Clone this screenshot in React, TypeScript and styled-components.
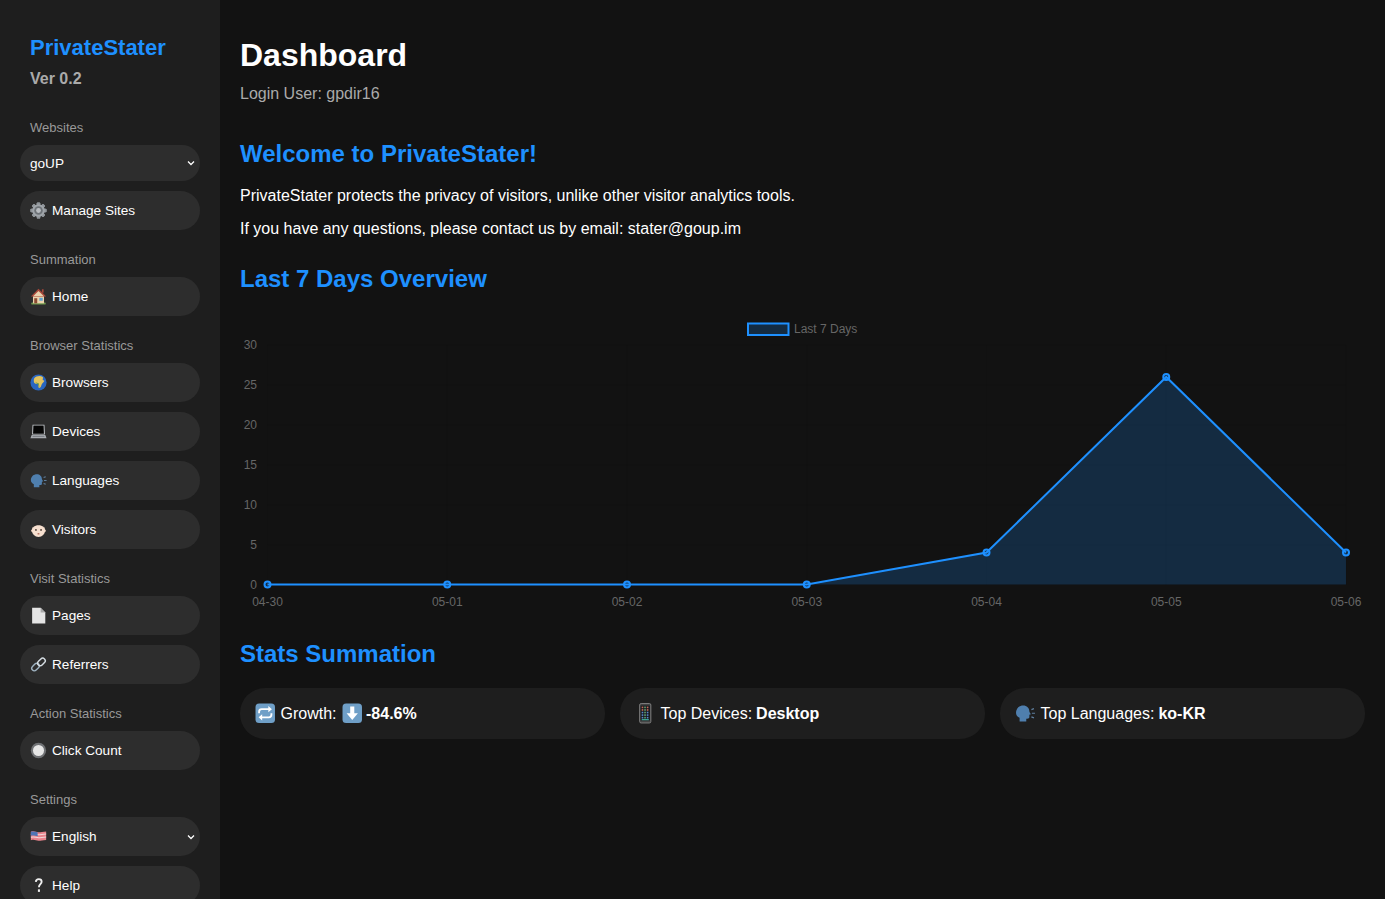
import React from "react";
import styled, { createGlobalStyle } from "styled-components";

const GlobalStyle = createGlobalStyle`
  html, body {
    margin: 0;
    padding: 0;
    height: 100%;
    background: #121212;
    font-family: "Liberation Sans", Arial, sans-serif;
    color: #fff;
    overflow: hidden;
  }
`;

const Layout = styled.div`
  display: flex;
  height: 899px;
  overflow: hidden;
`;

const Sidebar = styled.aside`
  width: 220px;
  flex-shrink: 0;
  box-sizing: border-box;
  padding: 20px;
  background: #1e1e1e;
  overflow: hidden;
`;

const Brand = styled.div`
  padding: 0 10px;
  margin-bottom: 32px;
`;

const BrandName = styled.div`
  margin-top: 15px;
  font-size: 22px;
  line-height: 25px;
  font-weight: 700;
  color: #1e90ff;
`;

const Version = styled.div`
  margin-top: 10px;
  font-size: 16px;
  line-height: 18px;
  font-weight: 700;
  color: #aaa;
`;

const NavGroup = styled.div`
  display: flex;
  flex-direction: column;
  gap: 10px;
  margin-bottom: 22px;
`;

const NavLabel = styled.div`
  padding: 0 10px;
  margin-bottom: 0;
  font-size: 13px;
  line-height: 15px;
  color: #999;
`;

const NavButton = styled.div<{ $short?: boolean }>`
  position: relative;
  display: flex;
  align-items: center;
  gap: 5px;
  flex-shrink: 0;
  box-sizing: border-box;
  height: ${(p) => (p.$short ? 36 : 39)}px;
  padding: 0 10px;
  border-radius: 20px;
  background: #2d2d2d;
  font-size: 13.6px;
  color: #fff;
`;

const Caret = styled.svg`
  position: absolute;
  right: 5px;
  top: 50%;
  width: 8px;
  height: 6px;
  margin-top: -3px;
`;

const Main = styled.main`
  flex: 1;
  min-width: 0;
  box-sizing: border-box;
  padding: 20px;
`;

const PageTitle = styled.h1`
  margin: 17px 0 0;
  font-size: 32px;
  line-height: 37px;
  font-weight: 700;
`;

const LoginUser = styled.div`
  margin-top: 11px;
  font-size: 16px;
  line-height: 18px;
  color: #aaa;
`;

const SectionTitle = styled.h2<{ $top: number }>`
  margin: ${(p) => p.$top}px 0 0;
  font-size: 24px;
  line-height: 28px;
  font-weight: 700;
  color: #1e90ff;
`;

const Paragraph = styled.p<{ $top: number }>`
  margin: ${(p) => p.$top}px 0 0;
  font-size: 16px;
  line-height: 18px;
  color: #fff;
`;

const ChartFrame = styled.svg`
  display: block;
  width: 1125px;
  height: 300px;
  margin-top: 17px;
`;

const StatRow = styled.div`
  display: grid;
  grid-template-columns: repeat(3, 1fr);
  gap: 15px;
  margin-top: 20px;
`;

const StatCard = styled.div`
  display: flex;
  align-items: center;
  gap: 5px;
  height: 51px;
  box-sizing: border-box;
  padding: 0 15px;
  border-radius: 25px;
  background: #1e1e1e;
  font-size: 16px;
  color: #fff;
`;

const StatValue = styled.strong`
  font-weight: 700;
  margin-left: -1px;
`;

const GlyphSvg = styled.svg<{ $size: number }>`
  flex-shrink: 0;
  width: ${(p) => p.$size}px;
  height: ${(p) => p.$size}px;
`;

type GlyphName =
  | "gear" | "house" | "globe" | "laptop" | "head" | "face" | "page"
  | "link" | "radio" | "flag" | "question" | "repeat" | "down" | "phone";

const gearTeeth = [0, 45, 90, 135, 180, 225, 270, 315];

function Glyph({ name, size = 17 }: { name: GlyphName; size?: number }) {
  return (
    <GlyphSvg $size={size} viewBox="0 0 20 20" aria-hidden="true">
      {name === "gear" && (
        <>
          {gearTeeth.map((a) => (
            <rect key={a} x="8" y="0.5" width="4" height="19" rx="1" fill="#8f9499" transform={`rotate(${a} 10 10)`} />
          ))}
          <circle cx="10" cy="10" r="7.4" fill="#9fa4a9" />
          <circle cx="10" cy="10" r="5" fill="#6d7277" />
          <circle cx="10" cy="10" r="2.8" fill="#b9bdc1" />
        </>
      )}
      {name === "house" && (
        <>
          <rect x="1.500" y="17" width="17" height="2.500" rx="1" fill="#6f9a4e" />
          <rect x="3.500" y="9" width="13" height="9" fill="#ecd3ad" />
          <path d="M10 1 19 10H1z" fill="#a9483a" />
          <path d="M10 3.500 16 9.500H4z" fill="#e9d2ae" />
          <rect x="14" y="1.500" width="2" height="4" fill="#a8473a" />
          <rect x="5" y="12" width="3.500" height="6" fill="#8a4a32" />
          <rect x="11" y="11.500" width="4" height="3.500" fill="#5ea2cf" />
        </>
      )}
      {name === "globe" && (
        <>
          <circle cx="10" cy="10" r="9.500" fill="#2a66c0" />
          <path d="M5 5c2-2.500 7-3.500 10-1.500 1 1.500-.5 2 0 3.500l2 1c-.5 2-3 2.500-3.500 5-.5 2-1.500 3.500-3 3.500-1-1.500-.5-3.500-1.500-5-2 .5-4.500-.5-4.500-3C4.500 7 4.500 6 5 5z" fill="#e3c35f" />
          <path d="M6.500 9c1 1.500 2.500 1.500 3.500 1.500.5 2 1 3.500 1 5.500-1-1-1-3-2-4.500-1 0-2-.5-2.500-2.500z" fill="#5b9a4c" />
        </>
      )}
      {name === "laptop" && (
        <>
          <path d="M3 2h14l.5 11.500h-15z" fill="#c8ccd0" />
          <path d="M4 3h12l.4 9.500H3.600z" fill="#050505" />
          <path d="M2 14h16l1.500 4H.5z" fill="#a9adb2" />
          <rect x="3" y="15" width="14" height="1.500" fill="#7d8186" />
        </>
      )}
      {name === "head" && (
        <>
          <path d="M1 9.500C1 5 4.500 2.500 8 2.500s6 2.500 6 5.500c0 1 1 2 1.500 3l-1.500.5v2.500c0 1-1 1.500-3 1.300v2.700H4.500v-3.500C2.500 13.500 1 12 1 9.500z" fill="#4f7fae" />
          <path d="M16 6.500l2.500-1M16.500 10h3M16 13.500l2.500 1" stroke="#5f7f9e" strokeWidth="1.200" fill="none" />
        </>
      )}
      {name === "face" && (
        <>
          <circle cx="2.800" cy="11.500" r="1.500" fill="#eccdb8" />
          <circle cx="17.200" cy="11.500" r="1.500" fill="#eccdb8" />
          <circle cx="10" cy="11" r="7.800" fill="#f6dfcf" />
          <path d="M3.500 7.500C4 3 7 .8 10 .8s6 2.200 6.500 6.700C14 5.500 12.500 5 10 5s-4 .5-6.500 2.500z" fill="#2b2a2a" />
          <circle cx="7" cy="10.500" r="1" fill="#3a2a22" />
          <circle cx="13" cy="10.500" r="1" fill="#3a2a22" />
          <ellipse cx="10" cy="15" rx="1.300" ry="1" fill="#b5705f" />
        </>
      )}
      {name === "page" && (
        <>
          <path d="M2.500 1h10L18 6.500v13H2.500z" fill="#e4e4e4" />
          <path d="M12.500 1v5.500H18z" fill="#a9a9a9" />
        </>
      )}
      {name === "link" && (
        <g fill="none" strokeWidth="1.700" strokeLinecap="round">
          <rect x="1.500" y="10" width="10" height="6" rx="3" transform="rotate(-45 6.500 13)" stroke="#9fb3c2" />
          <rect x="8.500" y="4" width="10" height="6" rx="3" transform="rotate(-45 13.500 7)" stroke="#d5dde3" />
        </g>
      )}
      {name === "radio" && (
        <>
          <circle cx="10" cy="10" r="9" fill="#6f7174" />
          <circle cx="10" cy="10" r="6.500" fill="#e6e6e6" />
        </>
      )}
      {name === "flag" && (
        <>
          <path d="M1 4.500c4-1.500 6 .5 9 .5s5-1 9-1v10c-4 0-6 1-9 1s-5-2-9-.5z" fill="#e8848c" />
          <path d="M1 7.500c4-1.500 6 .5 9 .5s5-1 9-1M1 11c4-1.500 6 .5 9 .5s5-1 9-1" stroke="#f2d7da" strokeWidth="1.200" fill="none" />
          <path d="M1 4.500c3-1 5 0 8 .4v4.800c-3-.4-5-1.400-8-.5z" fill="#4d74b5" />
        </>
      )}
      {name === "question" && (
        <>
          <path d="M6.800 5.800C7 3.700 8.500 2.500 10.300 2.500c2 0 3.400 1.300 3.400 3 0 2.800-3.200 3-3.200 6.500" stroke="#eee" strokeWidth="2.200" fill="none" />
          <rect x="9.300" y="14.500" width="2.400" height="3" fill="#eee" />
        </>
      )}
      {name === "repeat" && (
        <>
          <rect x="0.500" y="0.500" width="19" height="19" rx="3.500" fill="#6f9fc7" />
          <path d="M4 10V8.500C4 7 5 6 6.500 6H14M16 10v1.500c0 1.500-1 2.500-2.500 2.500H6" stroke="#fff" strokeWidth="1.800" fill="none" />
          <path d="M13 3l3.500 3L13 9zM7 11l-3.500 3L7 17z" fill="#fff" />
        </>
      )}
      {name === "down" && (
        <>
          <rect x="0.500" y="0.500" width="19" height="19" rx="3.500" fill="#6f9fc7" />
          <path d="M8 3.500h4V10h3.500L10 16.500 4.500 10H8z" fill="#fff" />
        </>
      )}
      {name === "phone" && (
        <>
          <rect x="4.500" y="0.500" width="11" height="19" rx="1.500" fill="#444" stroke="#8a8a8a" strokeWidth="0.800" />
          <rect x="5.500" y="2.500" width="9" height="14.500" fill="#16181c" />
          {[3.500, 6, 8.500, 11, 13.500].map((y) =>
            [6.500, 9, 11.500].map((x) => (
              <rect key={`${x}-${y}`} x={x} y={y} width="1.600" height="1.600" fill={x === 9 ? "#5f9f70" : y < 8 ? "#c86a5a" : "#5a86c8"} />
            ))
          )}
          <rect x="6.500" y="15.800" width="7" height="1" fill="#45c4b0" />
        </>
      )}
    </GlyphSvg>
  );
}

const ChevronMark = () => (
  <Caret viewBox="0 0 8 6" aria-hidden="true">
    <path d="M1 1.500 4 4.500 7 1.500" stroke="#fff" strokeWidth="1.300" fill="none" />
  </Caret>
);

const navGroups: { label: string; items: { icon: GlyphName; text: string }[] }[] = [
  { label: "Summation", items: [{ icon: "house", text: "Home" }] },
  {
    label: "Browser Statistics",
    items: [
      { icon: "globe", text: "Browsers" },
      { icon: "laptop", text: "Devices" },
      { icon: "head", text: "Languages" },
      { icon: "face", text: "Visitors" },
    ],
  },
  {
    label: "Visit Statistics",
    items: [
      { icon: "page", text: "Pages" },
      { icon: "link", text: "Referrers" },
    ],
  },
  { label: "Action Statistics", items: [{ icon: "radio", text: "Click Count" }] },
];

const days = ["04-30", "05-01", "05-02", "05-03", "05-04", "05-05", "05-06"];
const counts = [0, 0, 0, 0, 4, 26, 4];
const ticks = [0, 5, 10, 15, 20, 25, 30];

// chart coordinates, origin is the top left of ChartFrame
const plotLeft = 27.5;
const plotRight = 1106;
const plotBottom = 274.5;
const plotTop = 35;
const xAt = (i: number) => plotLeft + ((plotRight - plotLeft) / 6) * i;
const yAt = (v: number) => plotBottom - ((plotBottom - plotTop) / 30) * v;

function OverviewChart() {
  const line = counts.map((c, i) => `${xAt(i)},${yAt(c)}`).join(" ");
  const area = `${plotLeft},${plotBottom} ${line} ${plotRight},${plotBottom}`;
  return (
    <ChartFrame viewBox="0 0 1125 300">
      {ticks.map((t) => (
        <line key={t} x1={plotLeft} x2={plotRight} y1={yAt(t)} y2={yAt(t)} stroke="rgba(0,0,0,0.05)" />
      ))}
      {days.map((d, i) => (
        <line key={d} x1={xAt(i)} x2={xAt(i)} y1={plotTop} y2={plotBottom} stroke="rgba(0,0,0,0.05)" />
      ))}
      <rect x="508" y="13.500" width="40.500" height="11.500" fill="rgba(30,144,255,0.2)" stroke="#1e90ff" strokeWidth="2" />
      <text x="554" y="23" fontSize="12" fill="#666">Last 7 Days</text>
      {ticks.map((t) => (
        <text key={t} x="17" y={yAt(t) + 4} fontSize="12" fill="#666" textAnchor="end">{t}</text>
      ))}
      {days.map((d, i) => (
        <text key={d} x={xAt(i)} y="296" fontSize="12" fill="#666" textAnchor="middle">{d}</text>
      ))}
      <polygon points={area} fill="rgba(30,144,255,0.2)" />
      <polyline points={line} fill="none" stroke="#1e90ff" strokeWidth="2" />
      {counts.map((c, i) => (
        <circle key={i} cx={xAt(i)} cy={yAt(c)} r="3" fill="rgba(30,144,255,0.2)" stroke="#1e90ff" strokeWidth="2" />
      ))}
    </ChartFrame>
  );
}

export default function App() {
  return (
    <>
      <GlobalStyle />
      <Layout>
        <Sidebar>
          <Brand>
            <BrandName>PrivateStater</BrandName>
            <Version>Ver 0.2</Version>
          </Brand>
          <NavGroup>
            <NavLabel>Websites</NavLabel>
            <NavButton $short>
              goUP
              <ChevronMark />
            </NavButton>
            <NavButton>
              <Glyph name="gear" />
              Manage Sites
            </NavButton>
          </NavGroup>
          {navGroups.map((group) => (
            <NavGroup key={group.label}>
              <NavLabel>{group.label}</NavLabel>
              {group.items.map((item) => (
                <NavButton key={item.text}>
                  <Glyph name={item.icon} />
                  {item.text}
                </NavButton>
              ))}
            </NavGroup>
          ))}
          <NavGroup>
            <NavLabel>Settings</NavLabel>
            <NavButton>
              <Glyph name="flag" />
              English
              <ChevronMark />
            </NavButton>
            <NavButton>
              <Glyph name="question" />
              Help
            </NavButton>
          </NavGroup>
        </Sidebar>
        <Main>
          <PageTitle>Dashboard</PageTitle>
          <LoginUser>Login User: gpdir16</LoginUser>
          <SectionTitle $top={37}>Welcome to PrivateStater!</SectionTitle>
          <Paragraph $top={19}>PrivateStater protects the privacy of visitors, unlike other visitor analytics tools.</Paragraph>
          <Paragraph $top={15}>If you have any questions, please contact us by email: stater@goup.im</Paragraph>
          <SectionTitle $top={27}>Last 7 Days Overview</SectionTitle>
          <OverviewChart />
          <SectionTitle $top={30}>Stats Summation</SectionTitle>
          <StatRow>
            <StatCard>
              <Glyph name="repeat" size={20.5} />
              Growth:
              <Glyph name="down" size={20.5} />
              <StatValue>-84.6%</StatValue>
            </StatCard>
            <StatCard>
              <Glyph name="phone" size={20.5} />
              Top Devices:
              <StatValue>Desktop</StatValue>
            </StatCard>
            <StatCard>
              <Glyph name="head" size={20.5} />
              Top Languages:
              <StatValue>ko-KR</StatValue>
            </StatCard>
          </StatRow>
        </Main>
      </Layout>
    </>
  );
}
